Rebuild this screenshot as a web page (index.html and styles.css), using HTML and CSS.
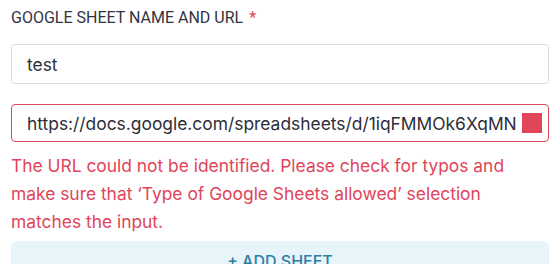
FILE: index.html
```html
<!DOCTYPE html>
<html>
<head>
<meta charset="utf-8">
<link rel="stylesheet" href="styles.css">
</head>
<body>
<div class="form">
  <div class="field-label">GOOGLE SHEET NAME AND URL <span class="req">*</span></div>
  <div class="input">test</div>
  <div class="input input-error">
    <span class="input-text">https://docs.google.com/spreadsheets/d/1iqFMMOk6XqMN</span>
    <span class="err-mark"></span>
  </div>
  <p class="error-msg">The URL could not be identified. Please check for typos and make sure that ‘Type of Google Sheets allowed’ selection matches the input.</p>
  <button class="add-btn">+ ADD SHEET</button>
</div>
</body>
</html>
```

FILE: styles.css
```css
html, body {
  margin: 0;
  padding: 0;
  background: #ffffff;
}
.form {
  padding: 7px 11px 0 11px;
  display: flex;
  flex-direction: column;
}
.field-label {
  font-family: Roboto, sans-serif;
  font-size: 16px;
  line-height: 21px;
  color: #33333f;
}
.req {
  color: #e0455a;
  margin-left: 2px;
}
.input {
  box-sizing: border-box;
  margin-top: 16px;
  height: 40px;
  border: 1px solid #dadada;
  border-radius: 4px;
  padding: 0 15px;
  font-family: Inter, sans-serif;
  font-size: 17.4px;
  color: #2e2e3a;
  display: flex;
  align-items: center;
}
.input-error {
  margin-top: 20px;
  height: 38px;
  border-color: #d94a5e;
  padding-right: 6px;
  gap: 4px;
}
.input-text {
  flex: 1;
  white-space: nowrap;
  overflow: hidden;
}
.err-mark {
  width: 20px;
  height: 20px;
  background: #e0455a;
  flex: none;
}
.error-msg {
  margin: 10px 0 0 0;
  font-family: Inter, sans-serif;
  font-size: 17.4px;
  line-height: 28px;
  color: #e0455a;
}
.add-btn {
  margin-top: 5px;
  height: 48px;
  border: none;
  border-radius: 6px;
  background: #e7f4f9;
  color: #2b7ea6;
  font-family: Inter, sans-serif;
  font-size: 16px;
  font-weight: 500;
  padding: 10px 0 0 0;
  text-align: center;
  align-self: stretch;
  display: flex;
  justify-content: center;
  align-items: flex-start;
}
```
